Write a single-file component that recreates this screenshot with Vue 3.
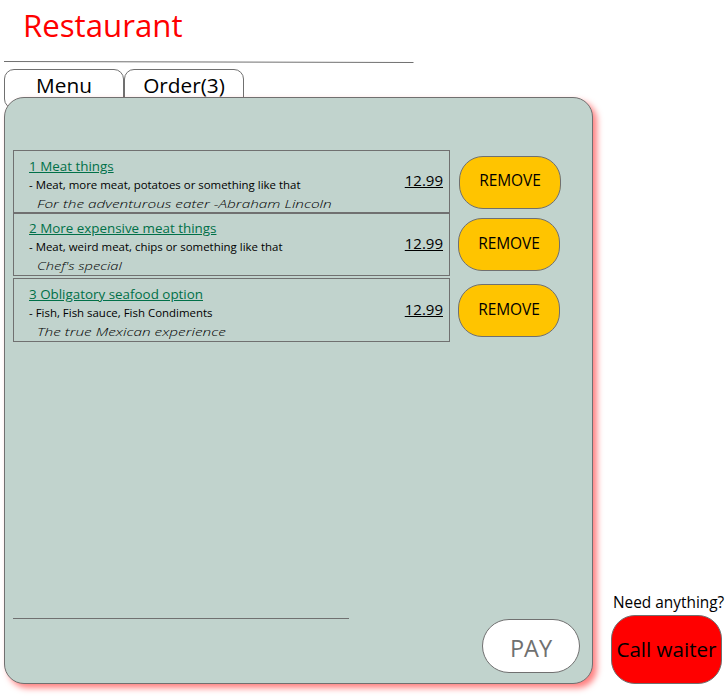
<script setup>
const orders = [
  { id: 1, name: 'Meat things', desc: 'Meat, more meat, potatoes or something like that', note: 'For the adventurous eater -Abraham Lincoln', price: '12.99' },
  { id: 2, name: 'More expensive meat things', desc: 'Meat, weird meat, chips or something like that', note: "Chef's special", price: '12.99' },
  { id: 3, name: 'Obligatory seafood option', desc: 'Fish, Fish sauce, Fish Condiments', note: 'The true Mexican experience', price: '12.99' },
]
</script>

<template>
  <div class="page">
    <main class="main">
      <h1 class="title"><span>Restaurant</span></h1>
      <svg class="rule" width="410" height="3" viewBox="0 0 410 3"><line x1="0" y1="0.5" x2="409.500" y2="1.500" /></svg>
      <nav class="tabs">
        <a class="tab"><span>Menu</span></a>
        <a class="tab"><span>Order({{ orders.length }})</span></a>
      </nav>
      <section class="panel">
        <ul class="orders">
          <li v-for="o in orders" :key="o.id" class="order" :class="'order-' + o.id">
            <div class="card">
              <div class="info">
                <a class="name"><span>{{ o.id }} {{ o.name }}</span></a>
                <p class="desc"><span>- {{ o.desc }}</span></p>
                <p class="note"><span>{{ o.note }}</span></p>
              </div>
              <span class="price">{{ o.price }}</span>
            </div>
            <button class="remove"><span>REMOVE</span></button>
          </li>
        </ul>
        <footer class="footer">
          <div class="line"></div>
          <button class="pay"><span>PAY</span></button>
        </footer>
      </section>
    </main>
    <aside class="help">
      <p class="need"><span>Need anything?</span></p>
      <button class="call"><span>Call waiter</span></button>
    </aside>
  </div>
</template>

<style>
body { background: #fff; overflow: hidden; }
</style>

<style scoped>
.page {
  display: flex;
  box-sizing: border-box;
  width: 727px;
  height: 697px;
  padding-left: 4px;
  overflow: hidden;
  color: #000;
  font-family: "Open Sans", "Noto Sans", sans-serif;
  font-weight: 400;
}
.page * { box-sizing: border-box; }
button { padding: 0; margin: 0; font-family: inherit; font-weight: inherit; color: #000; border: 1px solid #707070; white-space: nowrap; }
p, h1, ul { margin: 0; padding: 0; white-space: nowrap; }
.main { width: 589px; flex: none; }
.title {
  height: 61px;
  padding-left: 19px;
  font-size: 31.200px;
  font-weight: inherit;
  line-height: 50px;
  color: #f00;
}
.rule { display: block; stroke: #707070; stroke-width: 1; }
.tabs { display: flex; height: 33px; padding-top: 5px; }
.tab {
  width: 120px;
  height: 40px;
  border: 1px solid #707070;
  border-radius: 10px;
  background: #fff;
  font-size: 20.800px;
  line-height: 30px;
  text-align: center;
}
.panel {
  position: relative;
  display: flex;
  flex-direction: column;
  width: 589px;
  height: 587px;
  padding: 52px 12px 10px 8px;
  border: 1px solid #707070;
  border-radius: 20px;
  background: #c1d3cd;
  box-shadow: 4px 4px 6px rgba(255, 0, 0, 0.5);
}
.orders { list-style: none; }
.order { display: flex; height: 63px; }
.order-3 { margin-top: 2px; height: 64px; }
.card {
  display: flex;
  justify-content: space-between;
  width: 437px;
  padding: 6px 6px 0 15px;
  border: 1px solid #707070;
}
.order-2 .card { padding-top: 5px; }
.name { display: block; height: 19px; font-size: 13.400px; line-height: 19px; color: #007048; text-decoration: underline; white-space: nowrap; }
.desc { height: 18px; font-size: 11.450px; line-height: 18px; }
.note { height: 18px; padding-left: 8px; font-size: 11.500px; font-style: italic; font-weight: 300; line-height: 20px; }
.note span { display: inline-block; transform: scaleX(1.335); transform-origin: 0 50%; }
.order-2 .note span { transform: scaleX(1.28); }
.price { font-size: 15px; line-height: 46px; text-decoration: underline; }
.order-2 .price, .order-3 .price { line-height: 48px; }
.remove {
  width: 102px;
  height: 53px;
  margin: 5px 0 0 8px;
  padding-bottom: 3px;
  border-radius: 24px;
  background: #ffc400;
  font-size: 15.500px;
  letter-spacing: -0.1px;
}
.order-1 .remove { margin: 6px 0 0 9px; padding-bottom: 5px; }
.order-3 .remove { margin-top: 6px; }
.footer { display: flex; justify-content: space-between; margin-top: auto; }
.line { width: 336px; height: 1px; margin-top: -1px; background: #707070; }
.pay {
  width: 98px;
  height: 54px;
  padding-top: 3px;
  border-radius: 27px;
  background: #fff;
  color: #707070;
  font-size: 23.500px;
}
.help { width: 116px; flex: none; padding: 592px 0 0 18px; }
.need { height: 23px; padding-left: 2px; font-size: 15.400px; line-height: 21px; }
.call { width: 111px; height: 69px; padding-bottom: 2px; border-radius: 24px; background: #f00; font-size: 20.600px; }
</style>
